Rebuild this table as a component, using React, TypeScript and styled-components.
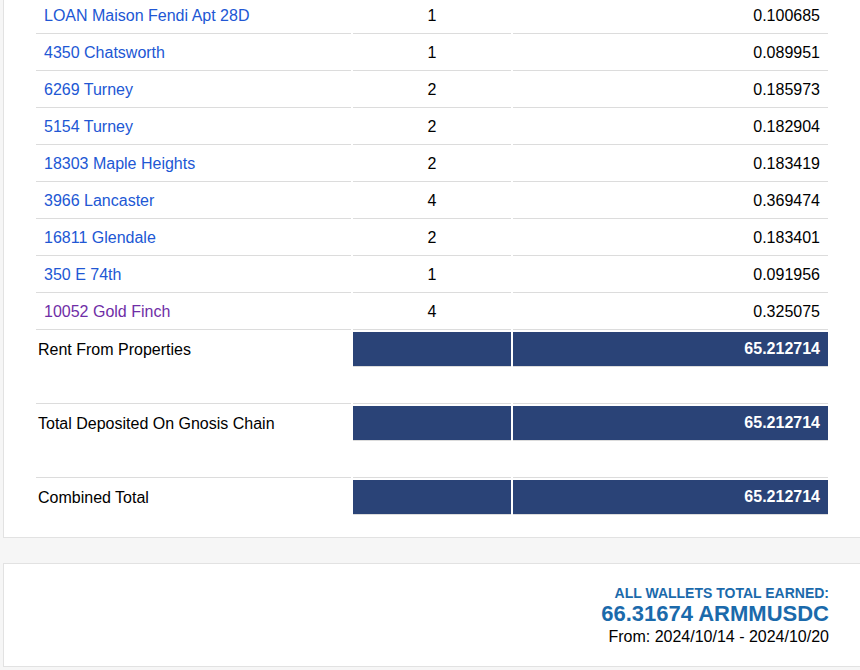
import { FC, Fragment } from "react";
import { styled, createGlobalStyle } from "styled-components";

type Property = {
  name: string;
  count: number;
  amount: string;
  visited?: boolean;
};

const properties: Property[] = [
  { name: "LOAN Maison Fendi Apt 28D", count: 1, amount: "0.100685" },
  { name: "4350 Chatsworth", count: 1, amount: "0.089951" },
  { name: "6269 Turney", count: 2, amount: "0.185973" },
  { name: "5154 Turney", count: 2, amount: "0.182904" },
  { name: "18303 Maple Heights", count: 2, amount: "0.183419" },
  { name: "3966 Lancaster", count: 4, amount: "0.369474" },
  { name: "16811 Glendale", count: 2, amount: "0.183401" },
  { name: "350 E 74th", count: 1, amount: "0.091956" },
  { name: "10052 Gold Finch", count: 4, amount: "0.325075", visited: true },
];

const totals = [
  { label: "Rent From Properties", amount: "65.212714" },
  { label: "Total Deposited On Gnosis Chain", amount: "65.212714" },
  { label: "Combined Total", amount: "65.212714" },
];

const GlobalStyle = createGlobalStyle`
  html, body {
    margin: 0;
    padding: 0;
    background: #f6f6f6;
    overflow: hidden;
    font-family: "Liberation Sans", Arial, sans-serif;
  }
`;

const Page = styled.div`
  display: flex;
  flex-direction: column;
  gap: 25px;
  width: 858px;
  margin: -3px 0 0 3px;
  height: 674px;
`;

const Panel = styled.section`
  background: #fff;
  border: 1px solid #e2e2e2;
`;

const TablePanel = styled(Panel)`
  border-top: none;
  padding: 0 30px 20px;
`;

const Table = styled.table`
  width: 100%;
  border-collapse: separate;
  border-spacing: 2px;
  font-size: 16px;
  line-height: 18px;
  color: #000;

  col.name {
    width: 40%;
  }
  col.count {
    width: 20%;
  }
  col.amount {
    width: 40%;
  }
`;

const Cell = styled.td<{ $align?: "left" | "center" | "right" }>`
  padding: 8px;
  height: 18px;
  text-align: ${(p) => p.$align ?? "left"};
  border-bottom: 1px solid #dcdcdc;
  white-space: nowrap;
`;

const PropertyLink = styled.a<{ $visited?: boolean }>`
  color: ${(p) => (p.$visited ? "#6f2ea6" : "#2157d4")};
  text-decoration: none;
`;

const LabelCell = styled.td`
  padding: 9px 2px 7px;
  border-bottom: 1px solid transparent;
  white-space: nowrap;
`;

const TotalCell = styled.td`
  padding: 8px;
  background: #2a4377;
  color: #fff;
  font-weight: 700;
  text-align: right;
  border-bottom: 1px solid #dcdcdc;
`;

const SpacerCell = styled.td`
  padding: 8px;
  height: 18px;
  border-bottom: 1px solid #dcdcdc;
`;

const SummaryPanel = styled(Panel)`
  display: flex;
  flex-direction: column;
  align-items: flex-end;
  padding: 21px 31px 19px;
`;

const SummaryTitle = styled.div`
  color: #1b6aab;
  font-size: 14px;
  line-height: 16px;
  font-weight: 700;
`;

const SummaryAmount = styled.div`
  color: #1b6aab;
  font-size: 22px;
  line-height: 25px;
  font-weight: 700;
`;

const SummaryRange = styled.div`
  margin-top: 1px;
  color: #000;
  font-size: 16px;
  line-height: 20px;
`;

const App: FC = () => {
  return (
    <>
      <GlobalStyle />
      <Page>
        <TablePanel>
          <Table>
            <colgroup>
              <col className="name" />
              <col className="count" />
              <col className="amount" />
            </colgroup>
            <tbody>
              {properties.map((p) => (
                <tr key={p.name}>
                  <Cell>
                    <PropertyLink href="#" $visited={p.visited}>
                      {p.name}
                    </PropertyLink>
                  </Cell>
                  <Cell $align="center">{p.count}</Cell>
                  <Cell $align="right">{p.amount}</Cell>
                </tr>
              ))}
              {totals.map((t, i) => (
                <Fragment key={t.label}>
                  <tr>
                    <LabelCell>{t.label}</LabelCell>
                    <TotalCell></TotalCell>
                    <TotalCell>{t.amount}</TotalCell>
                  </tr>
                  {i < totals.length - 1 && (
                    <tr>
                      <SpacerCell />
                      <SpacerCell />
                      <SpacerCell />
                    </tr>
                  )}
                </Fragment>
              ))}
            </tbody>
          </Table>
        </TablePanel>
        <SummaryPanel>
          <SummaryTitle>ALL WALLETS TOTAL EARNED:</SummaryTitle>
          <SummaryAmount>66.31674 ARMMUSDC</SummaryAmount>
          <SummaryRange>From: 2024/10/14 - 2024/10/20</SummaryRange>
        </SummaryPanel>
      </Page>
    </>
  );
};

export default App;
